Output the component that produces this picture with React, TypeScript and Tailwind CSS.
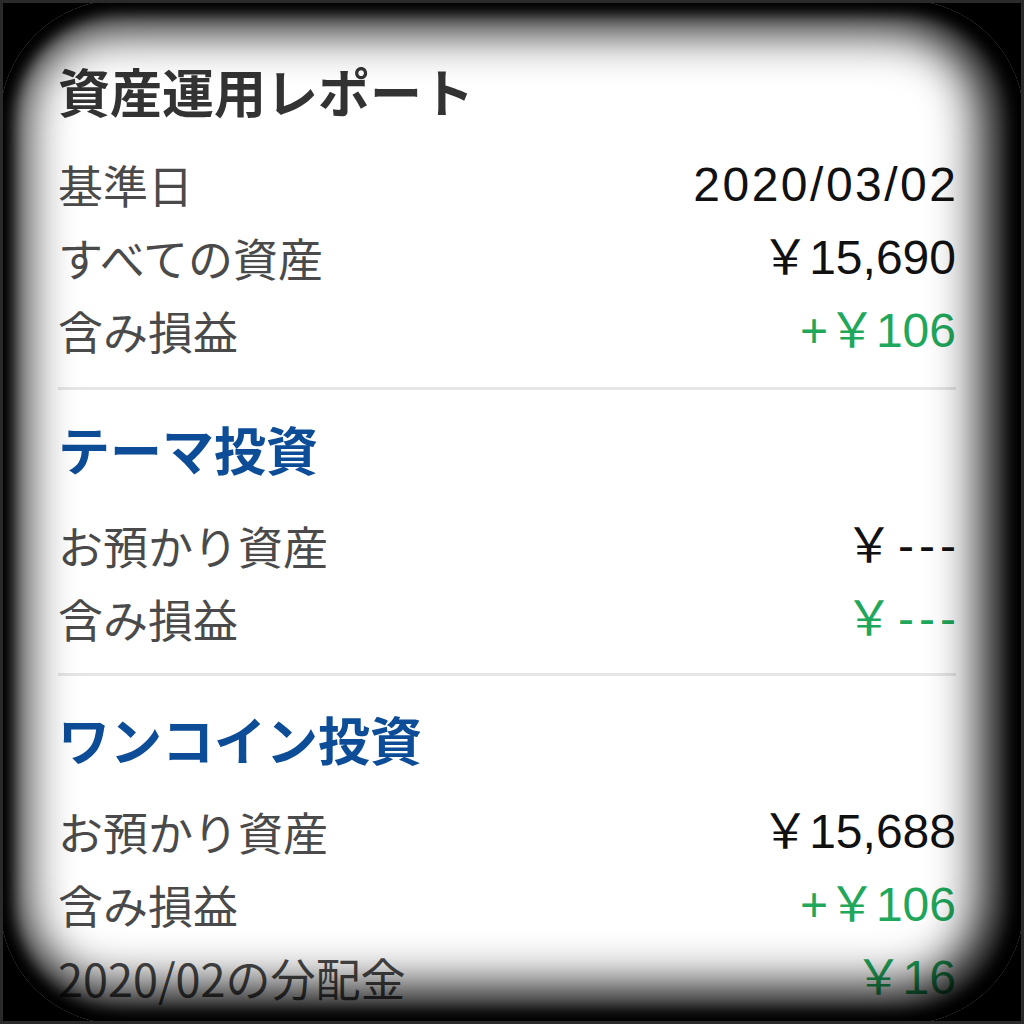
import React from "react";

const JP = "font-['Noto_Sans_CJK_JP',sans-serif]";
const NUM = "font-['Liberation_Sans','Noto_Sans_CJK_JP',sans-serif]";

function Row({ label, value, tone = "black", extra = "" }: { label: string; value: string; tone?: "black" | "green"; extra?: string }) {
  return (
    <div className="flex h-[73px] items-center justify-between">
      <span className={`${JP} text-[45px] leading-none text-[#4a4a4a]`}>{label}</span>
      <span
        className={`${NUM} text-[48px] leading-none ${tone === "green" ? "text-[#1fa75b]" : "text-[#111111]"} ${extra}`}
      >
        {value}
      </span>
    </div>
  );
}

function Divider() {
  return <div className="h-[3px] w-full bg-[#e6e6e6]" />;
}

function Heading({ children, pad }: { children: React.ReactNode; pad: string }) {
  return (
    <div className={`flex h-[119px] items-center ${pad}`}>
      <span className={`${JP} text-[52px] font-bold leading-none text-[#0d4c96]`}>{children}</span>
    </div>
  );
}

export default function App() {
  return (
    <div className="relative h-[1024px] w-[1024px] overflow-hidden bg-black">
      <div className="relative h-full w-full rounded-[120px] bg-white">
        <div className="flex flex-col pl-[58px] pr-[68px] pt-[56px]">
          <div className="flex h-[70px] items-center">
            <h1 className={`${JP} text-[52px] font-semibold leading-none text-[#333333]`}>資産運用レポート</h1>
          </div>
          <div className="h-[22px]" />
          <Row label="基準日" value="2020/03/02" extra="tracking-[2.5px] mr-[-2.5px]" />
          <Row label="すべての資産" value="￥15,690" />
          <Row label="含み損益" value="+￥106" tone="green" />
          <div className="h-[20px]" />
          <Divider />
          <Heading pad="pb-[2px]">テーマ投資</Heading>
          <Row label="お預かり資産" value="￥---" extra="tracking-[5px] mr-[-5px]" />
          <Row label="含み損益" value="￥---" tone="green" extra="tracking-[5px] mr-[-5px]" />
          <div className="h-[18px]" />
          <Divider />
          <Heading pad="pt-[6px]">ワンコイン投資</Heading>
          <Row label="お預かり資産" value="￥15,688" />
          <Row label="含み損益" value="+￥106" tone="green" />
          <Row label="2020/02の分配金" value="￥16" tone="green" />
        </div>
        <div className="pointer-events-none absolute inset-0 rounded-[120px] shadow-[inset_-10px_-4px_50px_32px_#000,inset_0_0_14px_12px_#000]" />
      </div>
      <div className="pointer-events-none absolute inset-0 border-[3px] border-[#2a2a2a]" />
    </div>
  );
}
